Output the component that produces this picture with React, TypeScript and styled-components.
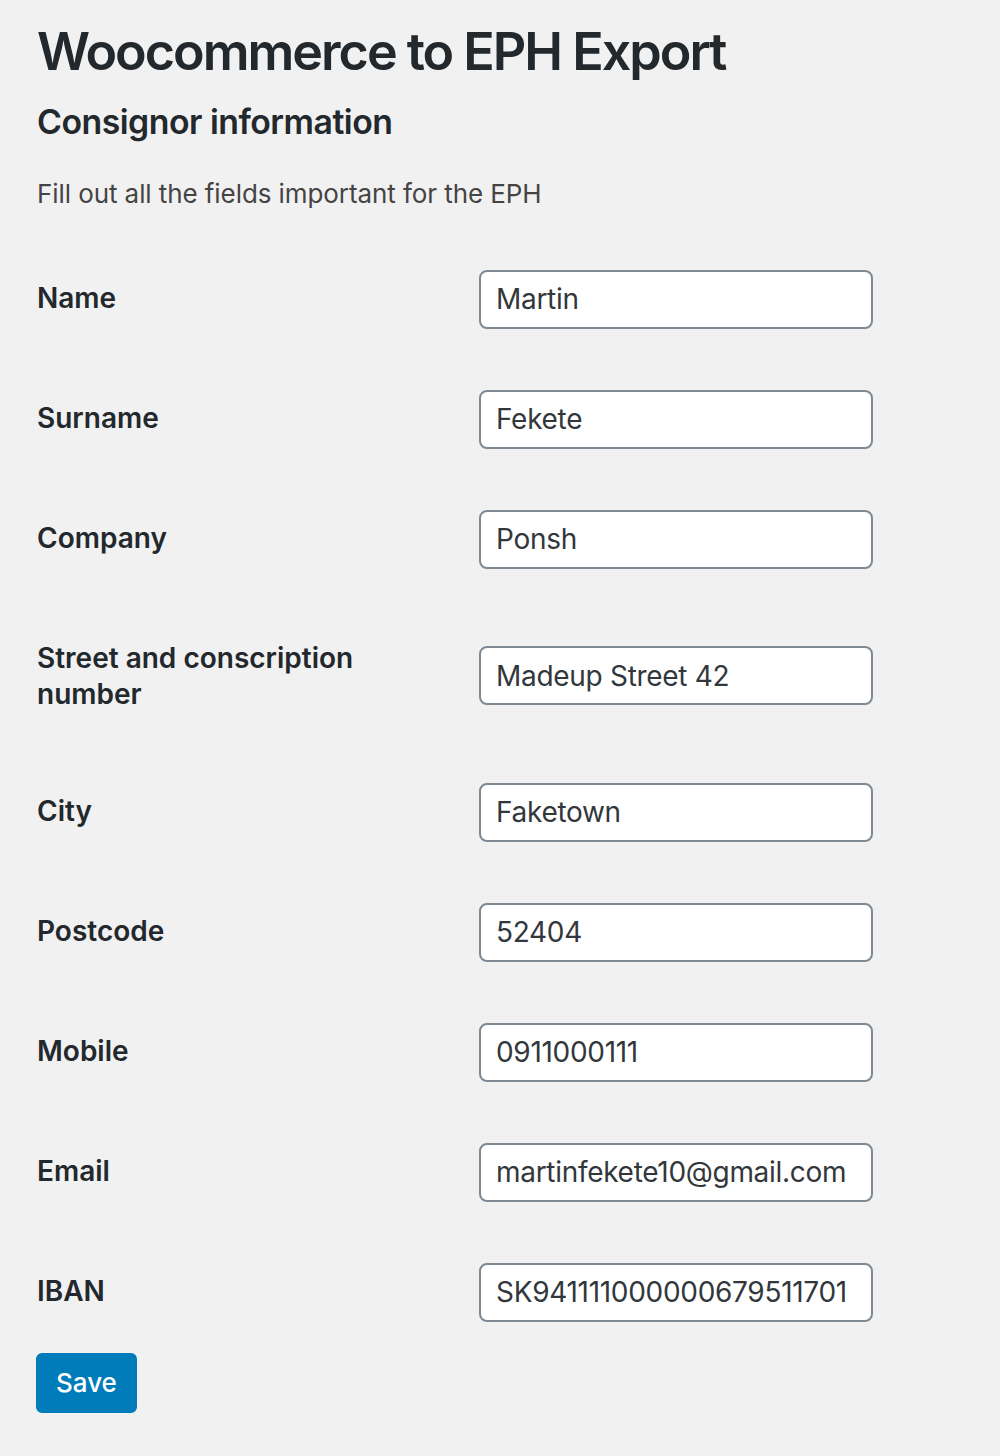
import React from 'react'
import styled, { createGlobalStyle } from 'styled-components'

const GlobalStyle = createGlobalStyle`
  html, body {
    margin: 0;
    padding: 0;
    background: #f1f1f1;
  }
  body {
    font-family: Inter, "Noto Sans", "Liberation Sans", sans-serif;
    color: #444;
  }
`

const Wrap = styled.div`
  display: flex;
  flex-direction: column;
  align-items: flex-start;
  padding: 21px 0 44px 37px;
  min-height: 1456px;
  box-sizing: border-box;
`

const Title = styled.h1`
  margin: 0;
  font-size: 52px;
  line-height: 1.2;
  font-weight: 600;
  color: #23282d;
  letter-spacing: -2px;
`

const Section = styled.h2`
  margin: 19px 0 0;
  font-size: 33.8px;
  line-height: 1.2;
  font-weight: 600;
  color: #23282d;
  letter-spacing: -0.5px;
`

const Intro = styled.p`
  margin: 31px 0 0;
  font-size: 26px;
  line-height: 1.5;
  color: #444;
  letter-spacing: -0.08px;
`

const FormTable = styled.table`
  margin-top: 27px;
  border-collapse: collapse;
  border-spacing: 0;
`

const Label = styled.th`
  width: 402px;
  padding: 40px 20px 40px 0;
  text-align: left;
  vertical-align: top;
  font-size: 28px;
  line-height: 1.3;
  font-weight: 600;
  color: #23282d;
`

const Cell = styled.td`
  padding: 30px 20px 31px;
  vertical-align: middle;
`

// $overflow: value is longer than the box, clip it a bit earlier like the browser did
const TextInput = styled.input<{ $overflow?: boolean }>`
  display: block;
  box-sizing: border-box;
  width: 394px;
  height: 59px;
  margin: 0;
  padding: 0 ${({ $overflow }) => ($overflow ? '25px' : '12px')} 0 15px;
  border: 2px solid #7e8993;
  border-radius: 8px;
  background: #fff;
  font-family: inherit;
  font-size: 28px;
  letter-spacing: -0.3px;
  color: #32373c;
  outline: none;
`

const SaveButton = styled.button`
  height: 60px;
  margin: 0 0 0 -1px;
  padding: 0 18px;
  border: 2px solid #007cba;
  border-radius: 6px;
  background: #007cba;
  color: #fff;
  font-family: inherit;
  font-size: 26px;
  font-weight: 500;
  cursor: pointer;
`

const fields: { label: string; value: string; long?: boolean }[] = [
  { label: 'Name', value: 'Martin' },
  { label: 'Surname', value: 'Fekete' },
  { label: 'Company', value: 'Ponsh' },
  { label: 'Street and conscription number', value: 'Madeup Street 42' },
  { label: 'City', value: 'Faketown' },
  { label: 'Postcode', value: '52404' },
  { label: 'Mobile', value: '0911000111' },
  { label: 'Email', value: 'martinfekete10@gmail.com' },
  { label: 'IBAN', value: 'SK9411110000006795117012', long: true },
]

export default function App() {
  return (
    <>
      <GlobalStyle />
      <Wrap>
        <Title>Woocommerce to EPH Export</Title>
        <Section>Consignor information</Section>
        <Intro>Fill out all the fields important for the EPH</Intro>
        <FormTable>
          <tbody>
            {fields.map((f) => (
              <tr key={f.label}>
                <Label scope="row">{f.label}</Label>
                <Cell>
                  <TextInput type="text" defaultValue={f.value} $overflow={f.long} />
                </Cell>
              </tr>
            ))}
          </tbody>
        </FormTable>
        <SaveButton type="submit">Save</SaveButton>
      </Wrap>
    </>
  )
}
